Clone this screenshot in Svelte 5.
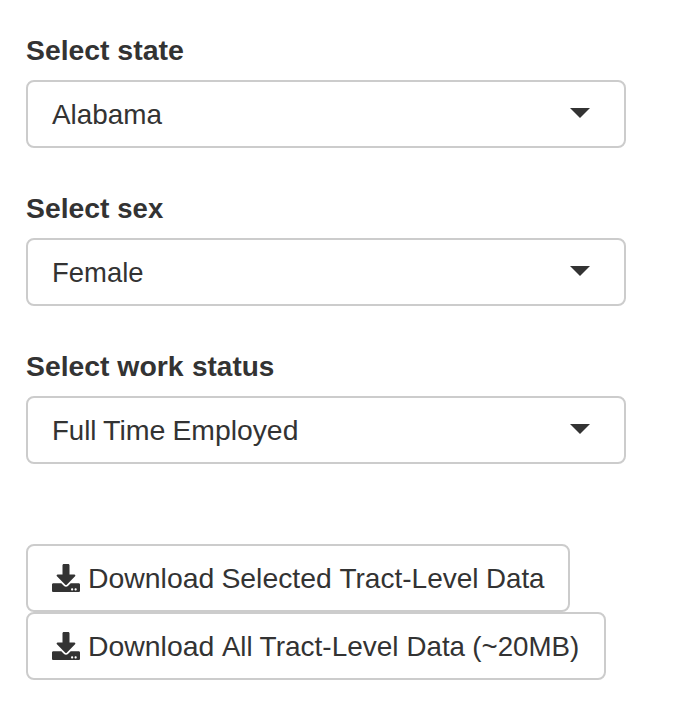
<script>
  // Each word is [text, start, width], relative to the start of its line.
  const fields = [
    { label: [['Select', 0, 83.5], ['state', 91.3, 66.7]], value: [['Alabama', 0, 110]] },
    { label: [['Select', 0, 83.5], ['sex', 91.3, 45.9]], value: [['Female', 0, 91.5]] },
    {
      label: [['Select', 0, 83.5], ['work', 91.3, 66.3], ['status', 166, 82.3]],
      value: [['Full', 0, 44.5], ['Time', 51, 62.5], ['Employed', 120.4, 126]]
    }
  ];
  const downloads = [
    { words: [['Download', 0, 126.3], ['Selected', 133.4, 110.4], ['Tract-Level', 251.4, 139.2], ['Data', 398, 58.5]], width: 456 },
    { words: [['Download', 0, 126.3], ['All', 134, 30.6], ['Tract-Level', 171.6, 139], ['Data', 318.5, 58.5], ['(~20MB)', 384.3, 107]], width: 492 }
  ];
</script>

{#snippet line(words, width)}
  <svg class="text" height="40" {width}>
    {#each words as [word, x, length]}
      <text {x} y="28" textLength={length} lengthAdjust="spacingAndGlyphs">{word}</text>
    {/each}
  </svg>
{/snippet}

<main>
  {#each fields as field}
    <section class="field">
      <div class="label">{@render line(field.label, 400)}</div>
      <button class="select">
        {@render line(field.value, 400)}
        <svg class="caret" width="20" height="10" viewBox="0 0 20 10"><path d="M0 0H20L10 10Z" /></svg>
      </button>
    </section>
  {/each}
  <div class="downloads">
    {#each downloads as item}
      <button class="download">
        <svg class="icon" width="28" height="28" viewBox="0 0 512 512"><path d="M216 0h80c13.300 0 24 10.700 24 24v168h87.700c17.800 0 26.700 21.500 14.100 34.100L269.700 378.300c-7.500 7.500-19.800 7.500-27.300 0L90.100 226.100c-12.600-12.600-3.700-34.100 14.100-34.100H192V24c0-13.300 10.700-24 24-24zm296 376v112c0 13.300-10.700 24-24 24H24c-13.300 0-24-10.700-24-24V376c0-13.300 10.700-24 24-24h146.700l49 49c20.100 20.100 52.500 20.100 72.600 0l49-49H488c13.300 0 24 10.700 24 24zm-124 88c0-11-9-20-20-20s-20 9-20 20 9 20 20 20 20-9 20-20zm64 0c0-11-9-20-20-20s-20 9-20 20 9 20 20 20 20-9 20-20z" /></svg>
        {@render line(item.words, item.width)}
      </button>
    {/each}
  </div>
</main>

<style>
  :global(body) { margin: 0; background: #fff; }
  main { box-sizing: border-box; width: 696px; height: 714px; padding: 32px 70px 0 26px; color: #333; font-family: "Liberation Sans", Arial, sans-serif; font-size: 28px; }
  svg { display: block; fill: currentColor; flex: none; }
  .text { overflow: visible; }
  .label { height: 48px; font-weight: 700; }
  .field { height: 158px; }
  button { box-sizing: border-box; display: flex; align-items: center; height: 68px; padding: 0 24px; border: 2px solid #ccc; border-radius: 8px; background: #fff; color: #333; font: inherit; }
  button .text { margin-top: 4px; }
  .select { width: 600px; padding-right: 34px; justify-content: space-between; }
  .caret { margin-bottom: 2px; }
  .downloads { display: flex; flex-direction: column; align-items: flex-start; padding-top: 38px; }
  .download { gap: 8px; }
  .icon { margin-bottom: 1px; }
</style>
